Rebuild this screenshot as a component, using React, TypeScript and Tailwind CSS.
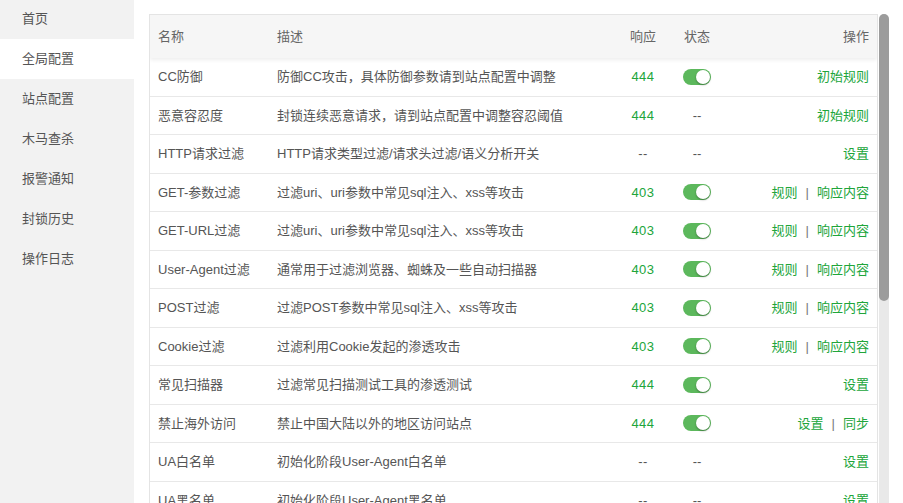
const menu = ["首页", "全局配置", "站点配置", "木马查杀", "报警通知", "封锁历史", "操作日志"];

type Row = {
  name: string;
  desc: string;
  code: string;
  on: boolean | null;
  ops: string[];
};

const rows: Row[] = [
  { name: "CC防御", desc: "防御CC攻击，具体防御参数请到站点配置中调整", code: "444", on: true, ops: ["初始规则"] },
  { name: "恶意容忍度", desc: "封锁连续恶意请求，请到站点配置中调整容忍阈值", code: "444", on: null, ops: ["初始规则"] },
  { name: "HTTP请求过滤", desc: "HTTP请求类型过滤/请求头过滤/语义分析开关", code: "--", on: null, ops: ["设置"] },
  { name: "GET-参数过滤", desc: "过滤uri、uri参数中常见sql注入、xss等攻击", code: "403", on: true, ops: ["规则", "响应内容"] },
  { name: "GET-URL过滤", desc: "过滤uri、uri参数中常见sql注入、xss等攻击", code: "403", on: true, ops: ["规则", "响应内容"] },
  { name: "User-Agent过滤", desc: "通常用于过滤浏览器、蜘蛛及一些自动扫描器", code: "403", on: true, ops: ["规则", "响应内容"] },
  { name: "POST过滤", desc: "过滤POST参数中常见sql注入、xss等攻击", code: "403", on: true, ops: ["规则", "响应内容"] },
  { name: "Cookie过滤", desc: "过滤利用Cookie发起的渗透攻击", code: "403", on: true, ops: ["规则", "响应内容"] },
  { name: "常见扫描器", desc: "过滤常见扫描测试工具的渗透测试", code: "444", on: true, ops: ["设置"] },
  { name: "禁止海外访问", desc: "禁止中国大陆以外的地区访问站点", code: "444", on: true, ops: ["设置", "同步"] },
  { name: "UA白名单", desc: "初始化阶段User-Agent白名单", code: "--", on: null, ops: ["设置"] },
  { name: "UA黑名单", desc: "初始化阶段User-Agent黑名单", code: "--", on: null, ops: ["设置"] },
];

const Toggle = () => (
  <div className="w-[28px] h-[16px] rounded-full bg-[#5cb85c] flex items-center justify-end pr-[1px]">
    <div className="w-[14px] h-[14px] rounded-full bg-white shadow-[0_1px_2px_rgba(0,0,0,0.35)]" />
  </div>
);

const App = () => {
  return (
    <div
      className="w-[903px] h-[503px] flex overflow-hidden bg-white text-[13px] text-[#555]"
      style={{ fontFamily: '"Liberation Sans", "Noto Sans CJK SC", sans-serif' }}
    >
      <div className="w-[134px] shrink-0 bg-[#f2f2f2] flex flex-col -mt-px">
        {menu.map((m) => (
          <div
            key={m}
            className={
              "h-10 shrink-0 flex items-center pl-[22px] text-[#555] " +
              (m === "全局配置" ? "bg-white" : "")
            }
          >
            {m}
          </div>
        ))}
      </div>
      <div className="flex-1 flex pt-[14px] pl-[15px]">
        <div className="w-[729px] h-[520px] border border-[#e4e4e4] flex flex-col overflow-hidden">
          <div className="h-[43px] shrink-0 flex items-center bg-[#f6f6f6] text-[#666] shadow-[0_2px_4px_rgba(0,0,0,0.07)] relative">
            <div className="w-[118px] pl-[8px]">名称</div>
            <div className="flex-1 pl-[9px]">描述</div>
            <div className="w-[56px] text-center">响应</div>
            <div className="w-[52px] text-center">状态</div>
            <div className="w-[154px] text-right pr-[8px]">操作</div>
          </div>
          {rows.map((r) => (
            <div key={r.name} className="h-[38.5px] shrink-0 flex items-center border-b border-[#e8e8e8]">
              <div className="w-[118px] pl-[8px]">{r.name}</div>
              <div className="flex-1 pl-[9px]">{r.desc}</div>
              <div
                className={
                  "w-[56px] text-center tracking-[0.5px] " +
                  (r.code === "--" ? "text-[#555]" : "text-[#20a53a]")
                }
              >
                {r.code}
              </div>
              <div className="w-[52px] flex justify-center">
                {r.on ? <Toggle /> : <span>--</span>}
              </div>
              <div className="w-[154px] flex justify-end items-center pr-[8px] text-[#20a53a]">
                {r.ops.map((o, i) => (
                  <span key={o} className="flex items-center">
                    {i > 0 && <span className="mx-[8px] text-[#777]">|</span>}
                    {o}
                  </span>
                ))}
              </div>
            </div>
          ))}
        </div>
        <div className="w-[10px] ml-[1px] h-[520px] bg-[#e9e9e9] rounded-t-[5px] flex flex-col">
          <div className="h-[287px] rounded-[5px] bg-[#9c9c9c]" />
        </div>
      </div>
    </div>
  );
};

export default App;
